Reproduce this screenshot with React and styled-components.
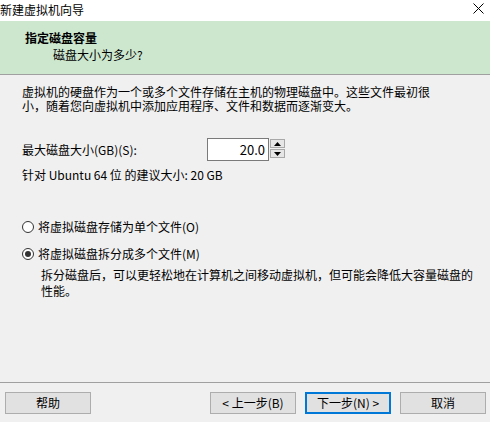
import React from "react";
import styled, { createGlobalStyle, css } from "styled-components";

const GlobalStyle = createGlobalStyle`
  html, body {
    margin: 0;
    padding: 0;
    background: #f0f0f0;
  }
  * {
    box-sizing: border-box;
  }
`;

const Window = styled.div`
  width: 490px;
  height: 422px;
  display: flex;
  flex-direction: column;
  background: #f0f0f0;
  color: #000;
  font-family: "Noto Sans CJK SC", "Noto Sans", sans-serif;
  font-size: 12px;
  overflow: hidden;
`;

const TitleBar = styled.div`
  height: 21px;
  background: #fff;
  display: flex;
  align-items: center;
  justify-content: space-between;
  padding: 0 6px 2px 0;
  font-size: 12px;
  line-height: 16px;
`;

const CloseButton = styled.div`
  width: 12px;
  height: 12px;
  display: flex;
  align-items: center;
  justify-content: center;
  margin-bottom: 3px;
`;

const Header = styled.div`
  height: 54px;
  background: #cde7cf;
  border-bottom: 1px solid #a0a0a0;
  padding: 9px 0 0 25px;
`;

const HeaderTitle = styled.div`
  font-weight: bold;
  line-height: 15px;
`;

const HeaderSub = styled.div`
  margin: 2px 0 0 28px;
  line-height: 15px;
`;

const Body = styled.div`
  flex: 1;
  padding: 10px 22px 0 22px;
`;

const Paragraph = styled.p`
  margin: 0;
  line-height: 14px;
  white-space: nowrap;
  ${(p) =>
    p.indent &&
    css`
      margin: 6px 0 0 19px;
      line-height: 16px;
    `}
`;

const SizeRow = styled.div`
  display: flex;
  align-items: center;
  margin-top: 25px;
  height: 23px;
`;

const Label = styled.span`
  width: 185px;
  line-height: 14px;
`;

const SpinBox = styled.div`
  display: flex;
  align-items: flex-start;
  height: 23px;
`;

const Input = styled.div`
  width: 62px;
  height: 23px;
  background: #fff;
  border: 1px solid #7a7a7a;
  text-align: right;
  padding: 3px 3px 0 0;
  font-size: 13px;
  line-height: 16px;
`;

const SpinButtons = styled.div`
  display: flex;
  flex-direction: column;
  gap: 1px;
  margin-left: 1px;
  padding-top: 1px;
`;

const SpinButton = styled.div`
  width: 15px;
  height: 9px;
  background: #e6e6e6;
  border: 1px solid #a8a8a8;
  display: flex;
  align-items: center;
  justify-content: center;
`;

const Suggest = styled.div`
  margin-top: 7px;
  line-height: 14px;
`;

const Options = styled.div`
  margin-top: 37px;
  display: flex;
  flex-direction: column;
  gap: 12px;
`;

const RadioRow = styled.label`
  display: flex;
  align-items: center;
  gap: 4px;
  line-height: 15px;
`;

const RadioCircle = styled.span`
  width: 12px;
  height: 12px;
  border-radius: 50%;
  border: 1px solid #333;
  background: #fff;
  display: flex;
  align-items: center;
  justify-content: center;
  ${(p) =>
    p.checked &&
    css`
      &::after {
        content: "";
        width: 6px;
        height: 6px;
        border-radius: 50%;
        background: #333;
      }
    `}
`;

const Footer = styled.div`
  height: 40px;
  border-top: 1px solid #a0a0a0;
  padding: 9px 4px 0 5px;
  display: flex;
  align-items: flex-start;
`;

const Spacer = styled.div`
  flex: 1;
`;

const Button = styled.button`
  width: 86px;
  height: 22px;
  margin: 0;
  padding: 0;
  background: #e1e1e1;
  border: 1px solid #adadad;
  font-family: inherit;
  font-size: 12px;
  line-height: 16px;
  color: #000;
  display: flex;
  align-items: center;
  justify-content: center;
  & + & {
    margin-left: 9px;
  }
  ${(p) =>
    p.primary &&
    css`
      border: 2px solid #0078d7;
    `}
`;

function Arrow({ up }) {
  return (
    <svg width="7" height="4" viewBox="0 0 7 4">
      <polygon points={up ? "3.5,0 7,4 0,4" : "0,0 7,0 3.5,4"} fill="#000" />
    </svg>
  );
}

export default function App() {
  return (
    <>
      <GlobalStyle />
      <Window>
        <TitleBar>
          <span>新建虚拟机向导</span>
          <CloseButton>
            <svg width="11" height="11" viewBox="0 0 11 11">
              <path d="M0.5 0.5 L10.5 10.5 M10.5 0.5 L0.5 10.5" stroke="#000" strokeWidth="1" />
            </svg>
          </CloseButton>
        </TitleBar>
        <Header>
          <HeaderTitle>指定磁盘容量</HeaderTitle>
          <HeaderSub>磁盘大小为多少?</HeaderSub>
        </Header>
        <Body>
          <Paragraph>
            虚拟机的硬盘作为一个或多个文件存储在主机的物理磁盘中。这些文件最初很
            <br />
            小，随着您向虚拟机中添加应用程序、文件和数据而逐渐变大。
          </Paragraph>
          <SizeRow>
            <Label>最大磁盘大小(GB)(S):</Label>
            <SpinBox>
              <Input>20.0</Input>
              <SpinButtons>
                <SpinButton>
                  <Arrow up />
                </SpinButton>
                <SpinButton>
                  <Arrow />
                </SpinButton>
              </SpinButtons>
            </SpinBox>
          </SizeRow>
          <Suggest>针对 Ubuntu 64 位 的建议大小: 20 GB</Suggest>
          <Options>
            <RadioRow>
              <RadioCircle />
              将虚拟磁盘存储为单个文件(O)
            </RadioRow>
            <RadioRow>
              <RadioCircle checked />
              将虚拟磁盘拆分成多个文件(M)
            </RadioRow>
          </Options>
          <Paragraph indent>
            拆分磁盘后，可以更轻松地在计算机之间移动虚拟机，但可能会降低大容量磁盘的
            <br />
            性能。
          </Paragraph>
        </Body>
        <Footer>
          <Button>帮助</Button>
          <Spacer />
          <Button>&lt; 上一步(B)</Button>
          <Button primary>下一步(N) &gt;</Button>
          <Button>取消</Button>
        </Footer>
      </Window>
    </>
  );
}
